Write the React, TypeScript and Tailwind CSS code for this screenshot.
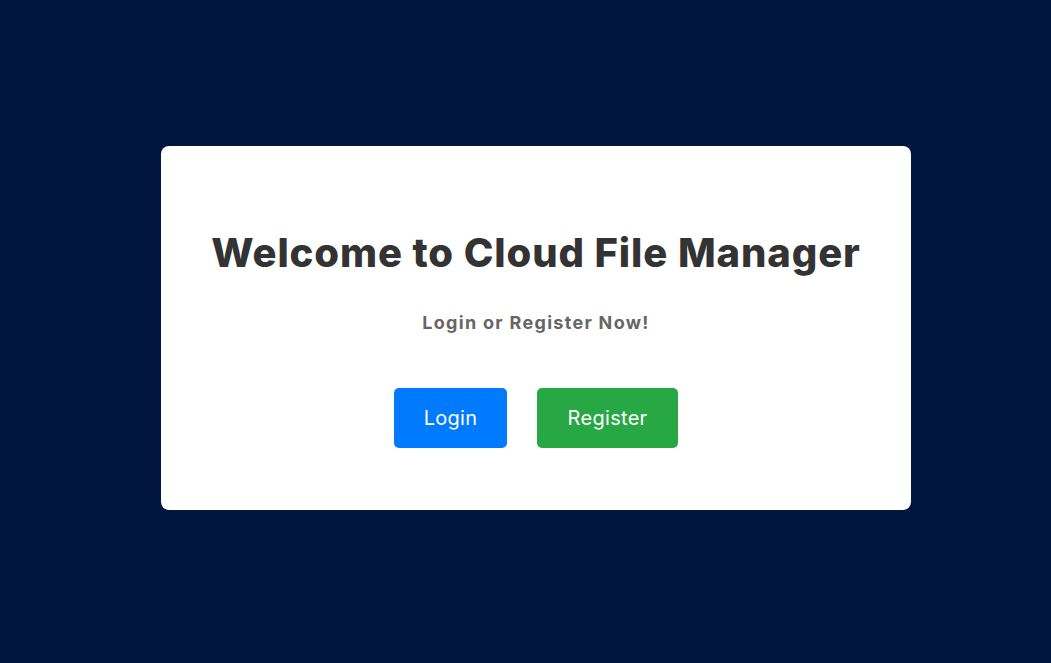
import React from 'react';

const App = () => {
  return <div className="min-h-screen bg-[#001540] flex justify-center items-start pt-[146px] pl-[21px] font-['Inter',sans-serif]">
      <div className="w-[750px] bg-white rounded-lg flex flex-col items-center pt-[83px] pb-[62px]">
        <h1 className="text-[40px] leading-[48px] font-extrabold text-[#333333] tracking-[0.9px]">
          Welcome to Cloud File Manager
        </h1>
        <p className="mt-[32px] text-[18px] leading-[27px] font-bold text-[#666666] tracking-[1.3px]">
          Login or Register Now!
        </p>
        <div className="mt-[52px] flex gap-[30px]">
          <button className="w-[113px] h-[60px] rounded-[5px] bg-[#007bff] text-white text-[20px] tracking-[0.3px]">
            Login
          </button>
          <button className="w-[141px] h-[60px] rounded-[5px] bg-[#28a745] text-white text-[20px] tracking-[0.3px]">
            Register
          </button>
        </div>
      </div>
    </div>;
};

export default App;
